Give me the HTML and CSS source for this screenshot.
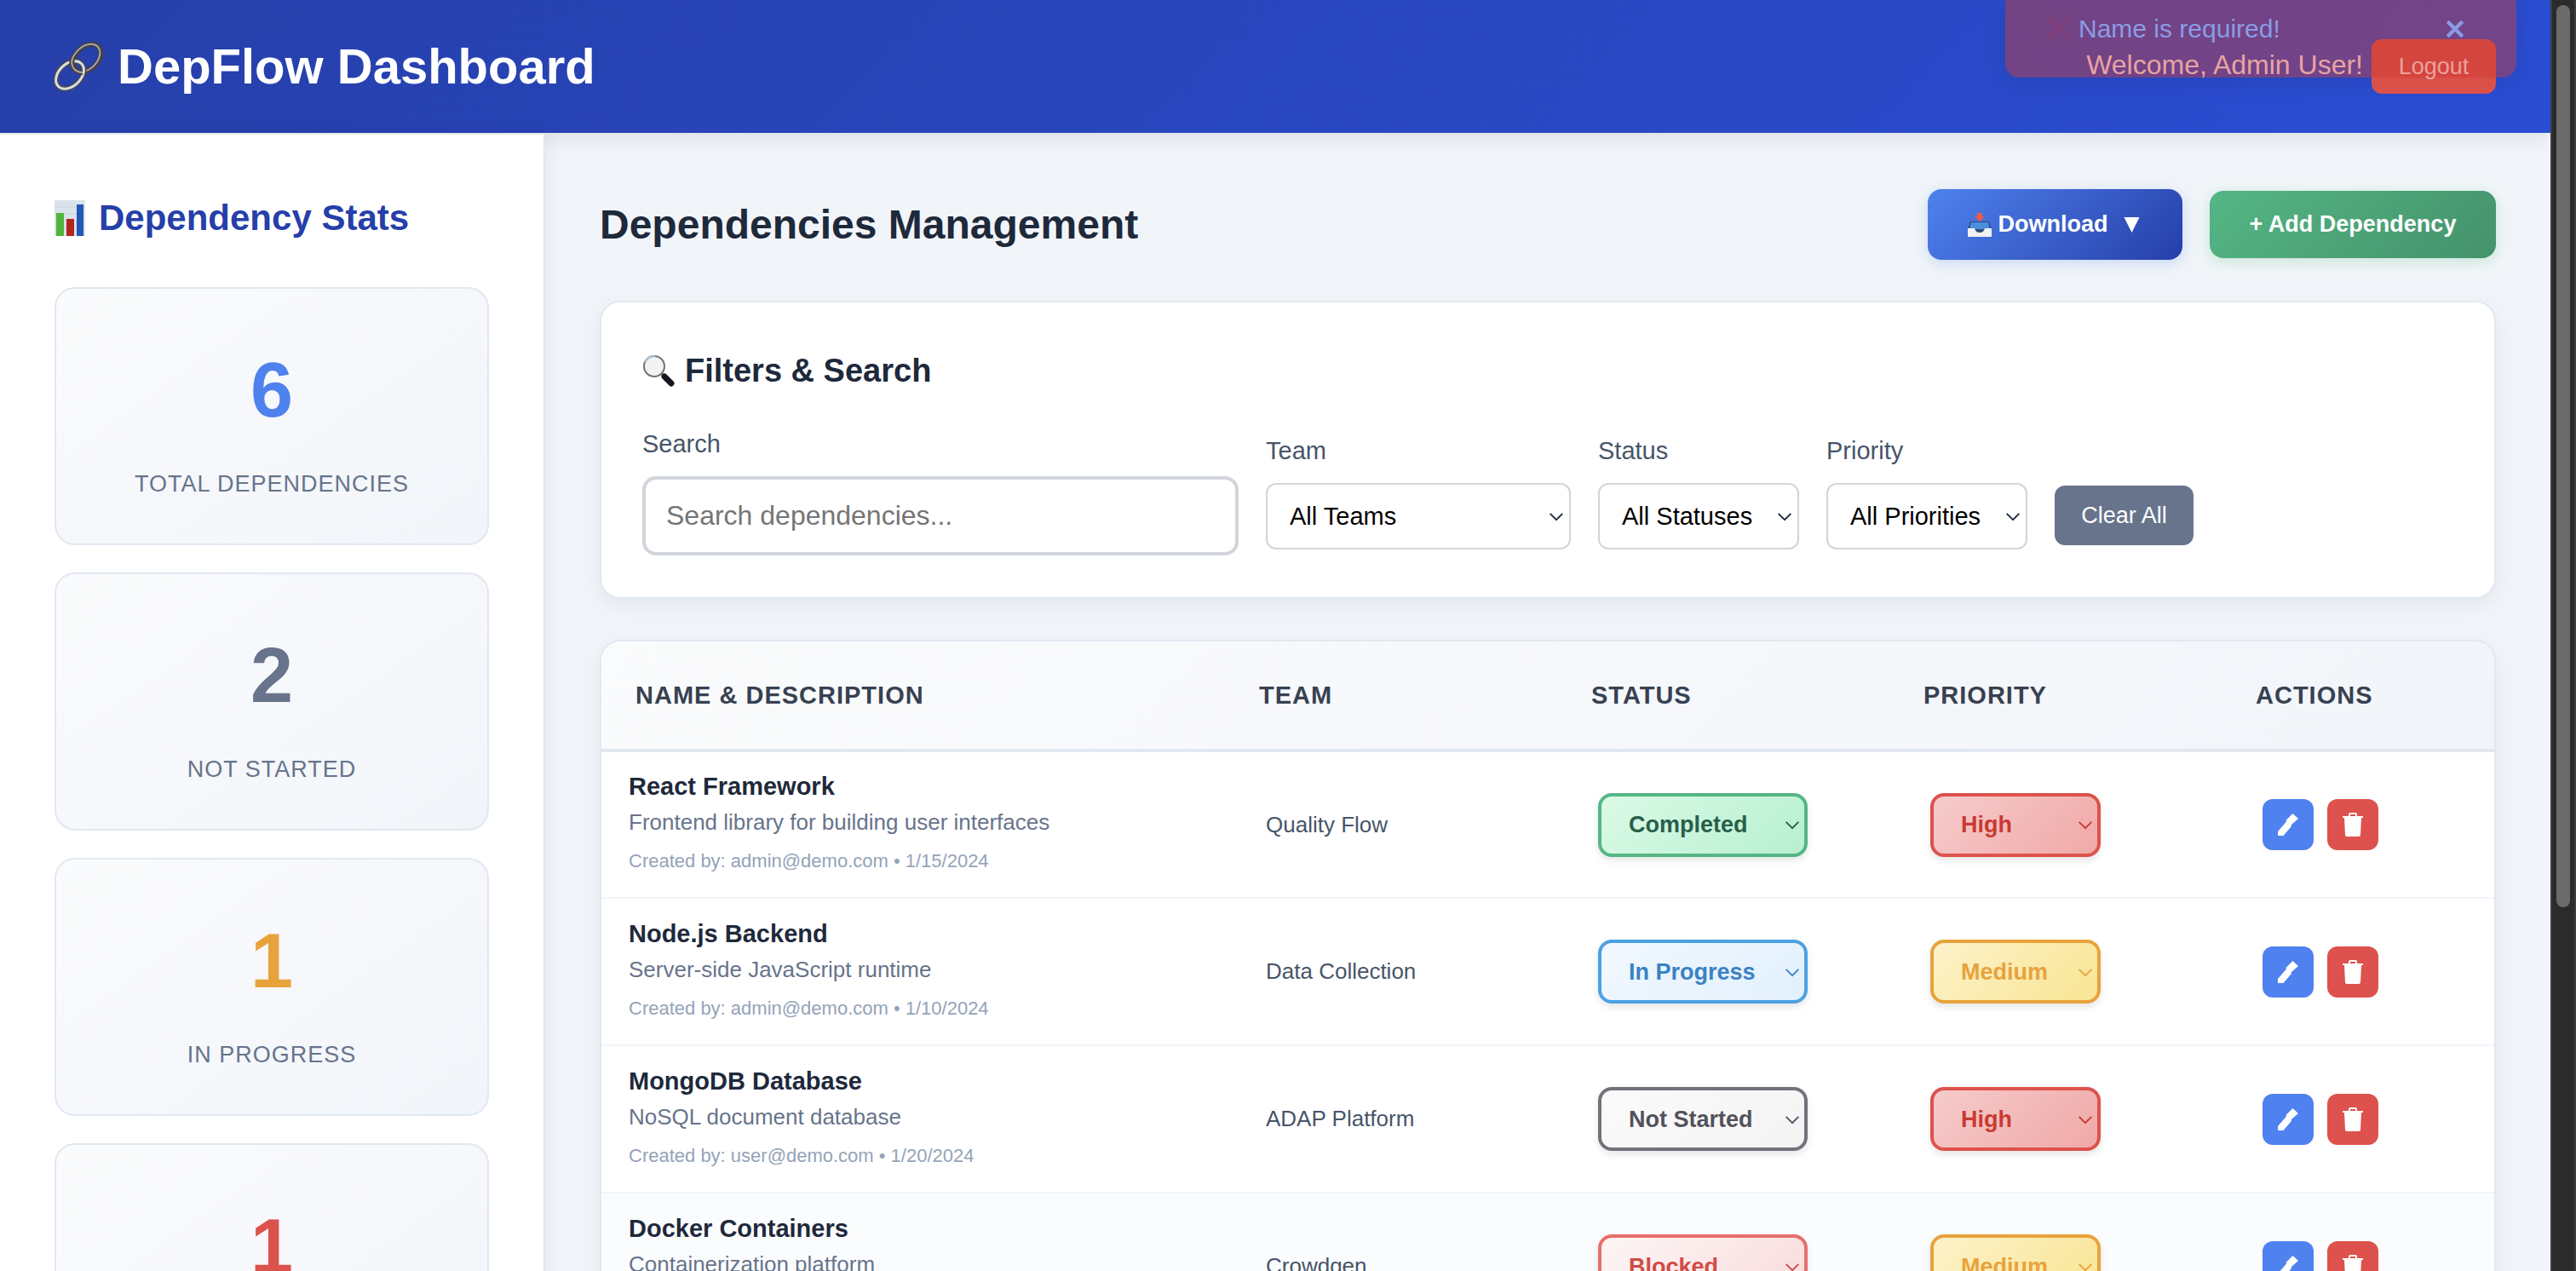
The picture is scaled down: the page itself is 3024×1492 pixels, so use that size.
FILE: index.html
```html
<!DOCTYPE html>
<html lang="en">
<head>
<meta charset="utf-8">
<title>DepFlow Dashboard</title>
<link rel="stylesheet" href="styles.css">
</head>
<body>
<svg class="sprite" aria-hidden="true">
  <symbol id="chev" viewBox="0 0 20 12"><path d="M2 2l8 8 8-8" fill="none" stroke="currentColor" stroke-width="2"/></symbol>
  <symbol id="pen" viewBox="0 0 24 26"><path d="M0 21 10 9.500 9.500 8 17.500 0 24 6 16 13l-.5 2.500L6.500 26H0Z" fill="currentColor"/></symbol>
  <symbol id="bin" viewBox="0 0 24 28"><path d="M0 4h7V2q0-2 2-2h6q2 0 2 2v2h7v2h-2l-1 20q0 2-2 2H5q-2 0-2-2L2 6H0ZM9 4h6V2H9Z" fill="currentColor" fill-rule="evenodd"/></symbol>
</svg>

<header class="topbar">
  <h1 class="brand">
    <svg class="brand-icon" viewBox="0 0 58 58" aria-hidden="true">
      <g fill="none">
        <ellipse cx="38" cy="19" rx="19" ry="13" transform="rotate(-44 38 19)" stroke="#463f41" stroke-width="6"/>
        <ellipse cx="37" cy="19" rx="19" ry="13" transform="rotate(-44 37 19)" stroke="#a4a6ac" stroke-width="2"/>
        <ellipse cx="18" cy="39" rx="19" ry="13" transform="rotate(-44 18 39)" stroke="#4a4a4e" stroke-width="6"/>
        <ellipse cx="18" cy="39" rx="19" ry="13" transform="rotate(-44 18 39)" stroke="#d8dde1" stroke-width="3"/>
        <path d="M22 17q-4 9 1 15 4 4 10 4" stroke="#463f41" stroke-width="6"/>
        <path d="M22 17q-4 9 1 15 4 4 10 4" stroke="#a4a6ac" stroke-width="2"/>
      </g>
    </svg>
    DepFlow Dashboard
  </h1>
  <div class="session">
    <span class="welcome">Welcome, Admin User!</span>
    <button class="logout" type="button">Logout</button>
  </div>
</header>

<div class="toast" role="alert">
  <svg class="toast-icon" viewBox="0 0 30 30" aria-hidden="true"><path d="M2 2l26 26M28 2 2 28" stroke="#7f3f7a" stroke-width="5"/></svg>
  <span class="toast-text">Name is required!</span>
  <button class="toast-close" type="button" aria-label="Close"><svg viewBox="0 0 22 22" aria-hidden="true"><path d="M3 3l16 16M19 3 3 19" stroke="currentColor" stroke-width="4"/></svg></button>
</div>

<div class="layout">
  <aside class="sidebar">
    <h2 class="side-title">
      <svg class="chart-icon" viewBox="0 0 36 42" aria-hidden="true">
        <path d="M0 0h36v42H0z" fill="#dbe3ea"/><path d="M0 8h36M0 16h36M0 24h36M0 32h36" stroke="#c6d2dc"/>
        <path d="M2 15h9v27H2z" fill="#52b43a"/><path d="M14 22h9v20h-9z" fill="#b3261c"/><path d="M26 5h8v37h-8z" fill="#2458b8"/>
      </svg>
      Dependency Stats
    </h2>
    <div class="stat"><strong class="total">6</strong><span>Total Dependencies</span></div>
    <div class="stat"><strong class="idle">2</strong><span>Not Started</span></div>
    <div class="stat"><strong class="active">1</strong><span>In Progress</span></div>
    <div class="stat"><strong class="stuck">1</strong><span>Blocked</span></div>
  </aside>

  <main class="content">
    <div class="heading">
      <h2>Dependencies Management</h2>
      <div class="heading-actions">
        <button class="btn download" type="button">
          <svg class="inbox-icon" viewBox="0 0 28 28" aria-hidden="true">
            <path d="M3 10h22l3 9v8H0v-8z" fill="#314a76"/><path d="M4 11h20l2 8H2z" fill="#4a8fdd"/><path d="M0 18h8q1 5 6 5t6-5h8v10H0z" fill="#f0f1f2"/>
            <path d="M11 0h6v4h3l-6 6-6-6h3z" fill="#e95b50"/>
          </svg>
          Download
          <svg class="tri" viewBox="0 0 20 20" aria-hidden="true"><path d="M0 0h20L10 20z" fill="currentColor"/></svg>
        </button>
        <button class="btn add" type="button">+ Add Dependency</button>
      </div>
    </div>

    <section class="panel filters">
      <h3>
        <svg class="lens-icon" viewBox="0 0 38 38" aria-hidden="true">
          <path d="M22 22l4 4" stroke="#6f7880" stroke-width="3"/>
          <path d="M26 26l8 8" stroke="#15181c" stroke-width="7" stroke-linecap="round"/>
          <circle cx="14" cy="14" r="12" fill="#f2f3f4" stroke="#77726a" stroke-width="2"/>
          <path d="M3 9Q7 2 15 2" stroke="#a9c4d8" stroke-width="2" fill="none"/>
        </svg>
        Filters &amp; Search
      </h3>
      <div class="filter-row">
        <div class="field search"><label for="q">Search</label><input id="q" type="text" placeholder="Search dependencies..."></div>
        <div class="field team"><label for="team">Team</label><div class="pick"><select id="team"><option>All Teams</option></select><svg><use href="#chev"/></svg></div></div>
        <div class="field"><label for="status">Status</label><div class="pick"><select id="status"><option>All Statuses</option></select><svg><use href="#chev"/></svg></div></div>
        <div class="field"><label for="priority">Priority</label><div class="pick"><select id="priority"><option>All Priorities</option></select><svg><use href="#chev"/></svg></div></div>
        <button class="clear" type="button">Clear All</button>
      </div>
    </section>

    <section class="panel list">
      <table>
        <colgroup><col class="c-name"><col class="c-mid"><col class="c-mid"><col class="c-mid"><col class="c-act"></colgroup>
        <thead><tr><th>Name &amp; Description</th><th>Team</th><th>Status</th><th>Priority</th><th>Actions</th></tr></thead>
        <tbody>
          <tr>
            <td><h4>React Framework</h4><p>Frontend library for building user interfaces</p><small>Created by: admin@demo.com • 1/15/2024</small></td>
            <td>Quality Flow</td>
            <td><div class="pick tag state completed"><select aria-label="Status"><option>Completed</option></select><svg><use href="#chev"/></svg></div></td>
            <td><div class="pick tag level high"><select aria-label="Priority"><option>High</option></select><svg><use href="#chev"/></svg></div></td>
            <td><div class="acts"><button class="edit" type="button" aria-label="Edit"><svg><use href="#pen"/></svg></button><button class="del" type="button" aria-label="Delete"><svg><use href="#bin"/></svg></button></div></td>
          </tr>
          <tr>
            <td><h4>Node.js Backend</h4><p>Server-side JavaScript runtime</p><small>Created by: admin@demo.com • 1/10/2024</small></td>
            <td>Data Collection</td>
            <td><div class="pick tag state progress"><select aria-label="Status"><option>In Progress</option></select><svg><use href="#chev"/></svg></div></td>
            <td><div class="pick tag level medium"><select aria-label="Priority"><option>Medium</option></select><svg><use href="#chev"/></svg></div></td>
            <td><div class="acts"><button class="edit" type="button" aria-label="Edit"><svg><use href="#pen"/></svg></button><button class="del" type="button" aria-label="Delete"><svg><use href="#bin"/></svg></button></div></td>
          </tr>
          <tr>
            <td><h4>MongoDB Database</h4><p>NoSQL document database</p><small>Created by: user@demo.com • 1/20/2024</small></td>
            <td>ADAP Platform</td>
            <td><div class="pick tag state waiting"><select aria-label="Status"><option>Not Started</option></select><svg><use href="#chev"/></svg></div></td>
            <td><div class="pick tag level high"><select aria-label="Priority"><option>High</option></select><svg><use href="#chev"/></svg></div></td>
            <td><div class="acts"><button class="edit" type="button" aria-label="Edit"><svg><use href="#pen"/></svg></button><button class="del" type="button" aria-label="Delete"><svg><use href="#bin"/></svg></button></div></td>
          </tr>
          <tr class="hovered">
            <td><h4>Docker Containers</h4><p>Containerization platform</p><small>Created by: user@demo.com • 1/12/2024</small></td>
            <td>Crowdgen</td>
            <td><div class="pick tag state blocked"><select aria-label="Status"><option>Blocked</option></select><svg><use href="#chev"/></svg></div></td>
            <td><div class="pick tag level medium"><select aria-label="Priority"><option>Medium</option></select><svg><use href="#chev"/></svg></div></td>
            <td><div class="acts"><button class="edit" type="button" aria-label="Edit"><svg><use href="#pen"/></svg></button><button class="del" type="button" aria-label="Delete"><svg><use href="#bin"/></svg></button></div></td>
          </tr>
        </tbody>
      </table>
    </section>
  </main>
</div>
<div class="scroll-track" aria-hidden="true"><div class="scroll-thumb"></div></div>
</body>
</html>
```

FILE: styles.css
```css
* { box-sizing: border-box; }
html { height: 100%; overflow: hidden; }
body {
  margin: 0;
  height: 100%;
  overflow: hidden;
  padding-right: 30px;
  background: #f1f5f9;
  color: #1e293b;
  font-family: "Liberation Sans", Arial, sans-serif;
  font-size: 28px;
}
h1, h2, h3, h4, p { margin: 0; }
button, input, select { font-family: inherit; }
button { border: 0; color: #fff; }
.sprite { display: none; }

/* Header */
.topbar {
  display: flex;
  justify-content: space-between;
  align-items: center;
  padding: 46px 64px;
  height: 156px;
  background: linear-gradient(135deg, #263fa9, #2a4dd3);
  box-shadow: 0 4px 24px rgba(0, 0, 0, .1);
}
.brand {
  display: flex;
  align-items: center;
  gap: 16px;
  color: #fff;
  font-size: 58px;
  line-height: 64px;
}
.brand-icon { width: 58px; height: 58px; overflow: visible; }
.session {
  position: relative;
  z-index: 2;
  display: flex;
  align-items: center;
  gap: 10px;
  color: #e8a4a2;
  font-size: 32px;
}
.welcome { padding-bottom: 4px; }
.logout {
  width: 146px;
  height: 64px;
  border-radius: 12px;
  background: linear-gradient(#d4453e 68%, #da514a 72%);
  color: #eaa19c;
  font-size: 27px;
}
.toast {
  position: absolute;
  z-index: 1;
  top: 0;
  right: 70px;
  display: flex;
  align-items: flex-start;
  width: 600px;
  height: 91px;
  padding: 16px 60px 0 48px;
  border-radius: 0 0 16px 16px;
  background: rgba(187, 60, 63, .5);
  box-shadow: 0 4px 24px rgba(0, 0, 0, .1);
  color: #8a9ce4;
  font-size: 30px;
  line-height: 36px;
}
.toast-icon { width: 30px; height: 30px; margin: 2px 8px 0 0; }
.toast-text { flex: 1; }
.toast-close { padding: 6px 0; background: none; color: #8a9ce4; }
.toast-close svg { display: block; width: 24px; height: 24px; }

/* Sidebar */
.layout { display: flex; align-items: flex-start; }
.sidebar {
  flex: none;
  width: 640px;
  padding: 74px 64px 64px;
  border-top: 2px solid #e5e9ee;
  border-right: 2px solid #e2e8f0;
  background: #fff;
  box-shadow: 4px 0 20px rgba(0, 0, 0, .05);
}
.side-title {
  display: flex;
  align-items: center;
  gap: 16px;
  margin-bottom: 57px;
  color: #263fa9;
  font-size: 42px;
  line-height: 48px;
}
.chart-icon { width: 36px; height: 42px; }
.stat {
  display: flex;
  flex-direction: column;
  align-items: center;
  gap: 44px;
  height: 303px;
  margin-bottom: 32px;
  padding: 71px 0 0;
  border: 2px solid #e2e8f0;
  border-radius: 24px;
  background: linear-gradient(145deg, #fafbfc, #f5f7fb 60%, #f1f5f9);
}
.stat strong { font-size: 90px; line-height: 96px; }
.stat span {
  color: #67748b;
  font-size: 27px;
  line-height: 36px;
  letter-spacing: 1px;
  text-transform: uppercase;
}
.total { color: #4f82ee; }
.idle { color: #67748b; }
.active { color: #e8a23c; }
.stuck { color: #dc524c; }

/* Content */
.content { flex: 1; min-width: 0; padding: 66px 64px 0; }
.heading {
  display: flex;
  justify-content: space-between;
  align-items: center;
  margin-bottom: 48px;
}
.heading h2 { font-size: 48px; line-height: 56px; }
.heading-actions { display: flex; align-items: center; gap: 32px; }
.btn {
  display: flex;
  align-items: center;
  justify-content: center;
  border-radius: 16px;
  font-size: 27px;
  font-weight: 700;
}
.download {
  gap: 8px;
  width: 299px;
  height: 83px;
  padding: 0 12px 0 8px;
  background: linear-gradient(135deg, #4f82ee, #263fa9);
  box-shadow: 0 4px 16px rgba(79, 130, 238, .25);
}
.add {
  width: 336px;
  height: 79px;
  background: linear-gradient(135deg, #55b685, #44926b);
  box-shadow: 0 4px 16px rgba(85, 182, 133, .25);
}
.inbox-icon { width: 28px; height: 28px; }
.tri { width: 19px; height: 18px; margin-left: 10px; }
.panel {
  border: 2px solid #e2e8f0;
  border-radius: 24px;
  background: #fff;
  box-shadow: 0 8px 24px rgba(0, 0, 0, .06);
}

/* Filters */
.filters { margin-bottom: 48px; padding: 56px 48px 49px; }
.filters h3 {
  display: flex;
  align-items: center;
  gap: 12px;
  margin-bottom: 44px;
  font-size: 38px;
  line-height: 48px;
}
.lens-icon { width: 38px; height: 38px; }
.filter-row { display: flex; align-items: center; gap: 32px; }
.field { width: 236px; }
.field.search { width: 700px; }
.field.team { width: 358px; }
.field label {
  display: block;
  margin-bottom: 20px;
  color: #475569;
  font-size: 29px;
  line-height: 36px;
}
.field input {
  display: block;
  width: 100%;
  height: 93px;
  padding: 0 24px;
  border: 4px solid #d1d5db;
  border-radius: 16px;
  font-size: 32px;
}
.field input::placeholder { color: #757575; }
.pick { position: relative; }
.pick select {
  display: block;
  width: 100%;
  height: 78px;
  padding: 0 26px;
  appearance: none;
  border: 2px solid #d1d5db;
  border-radius: 12px;
  background: #fff;
  color: #000;
  font-size: 29px;
}
.pick svg {
  position: absolute;
  top: 50%;
  right: 7px;
  width: 20px;
  height: 11px;
  margin-top: -5px;
  pointer-events: none;
}
.clear {
  align-self: flex-end;
  width: 163px;
  height: 70px;
  margin-bottom: 12px;
  border-radius: 12px;
  background: #67748b;
  font-size: 27px;
}

/* Table */
.list { overflow: hidden; }
table { width: 100%; table-layout: fixed; border-collapse: collapse; }
.c-name { width: 748px; }
.c-mid { width: 390px; }
thead { background: linear-gradient(135deg, #fafbfc, #f5f7fb 60%, #f1f5f9); }
th {
  height: 128px;
  padding: 0 24px;
  border-bottom: 4px solid #e2e8f0;
  color: #374151;
  font-size: 29px;
  letter-spacing: 1px;
  text-align: left;
  text-transform: uppercase;
}
th:first-child { padding-left: 40px; }
td {
  height: 173px;
  padding: 0 32px;
  border-bottom: 2px solid #f1f5f9;
  color: #475569;
  font-size: 26px;
}
td:first-child { padding-bottom: 6px; }
.hovered { background: #fbfcfe; }
td h4 { color: #1e293b; font-size: 29px; line-height: 36px; }
td p { margin: 6px 0 14px; color: #67748b; font-size: 26px; line-height: 36px; }
td small { display: block; color: #94a3b8; font-size: 22px; line-height: 28px; }
.tag.state { width: 246px; }
.tag.level { width: 200px; }
.tag select {
  height: 75px;
  padding: 0 32px;
  border: 4px solid var(--line);
  border-radius: 16px;
  background: linear-gradient(135deg, var(--from), var(--to));
  box-shadow: 0 4px 8px rgba(0, 0, 0, .1);
  color: var(--ink);
  font-size: 27px;
  font-weight: 700;
}
.tag svg { right: 8px; color: var(--ink); }
.completed { --line: #55b685; --from: #dafae6; --to: #b7f0d1; --ink: #285f4a; }
.progress { --line: #4ba1e2; --from: #f1f8ff; --to: #e2f0fc; --ink: #3b82c4; }
.waiting { --line: #71727a; --from: #fafafa; --to: #f4f4f5; --ink: #52525b; }
.blocked { --line: #e76f6b; --from: #fdf5f5; --to: #f9dcdc; --ink: #d14b45; }
.high { --line: #dd524c; --from: #f6cbcb; --to: #f0a9a8; --ink: #c93a33; }
.medium { --line: #e8a23c; --from: #fcf2c9; --to: #f9e594; --ink: #e8a23c; }
.acts { display: flex; gap: 16px; }
.acts button {
  display: grid;
  place-items: center;
  width: 60px;
  height: 60px;
  padding: 0;
  border-radius: 12px;
}
.acts svg { width: 24px; height: 28px; }
.edit { background: #4f82ee; }
.del { background: #dd524c; }

/* Scrollbar */
.scroll-track {
  position: absolute;
  top: 0;
  right: 0;
  width: 30px;
  height: 100%;
  background: #2b2b2b;
  border-left: 2px solid #3d3d3d;
  border-right: 2px solid #3d3d3d;
}
.scroll-thumb {
  width: 16px;
  height: 71%;
  margin: 6px auto 0;
  border-radius: 8px;
  background: #6b6b6b;
}
```
